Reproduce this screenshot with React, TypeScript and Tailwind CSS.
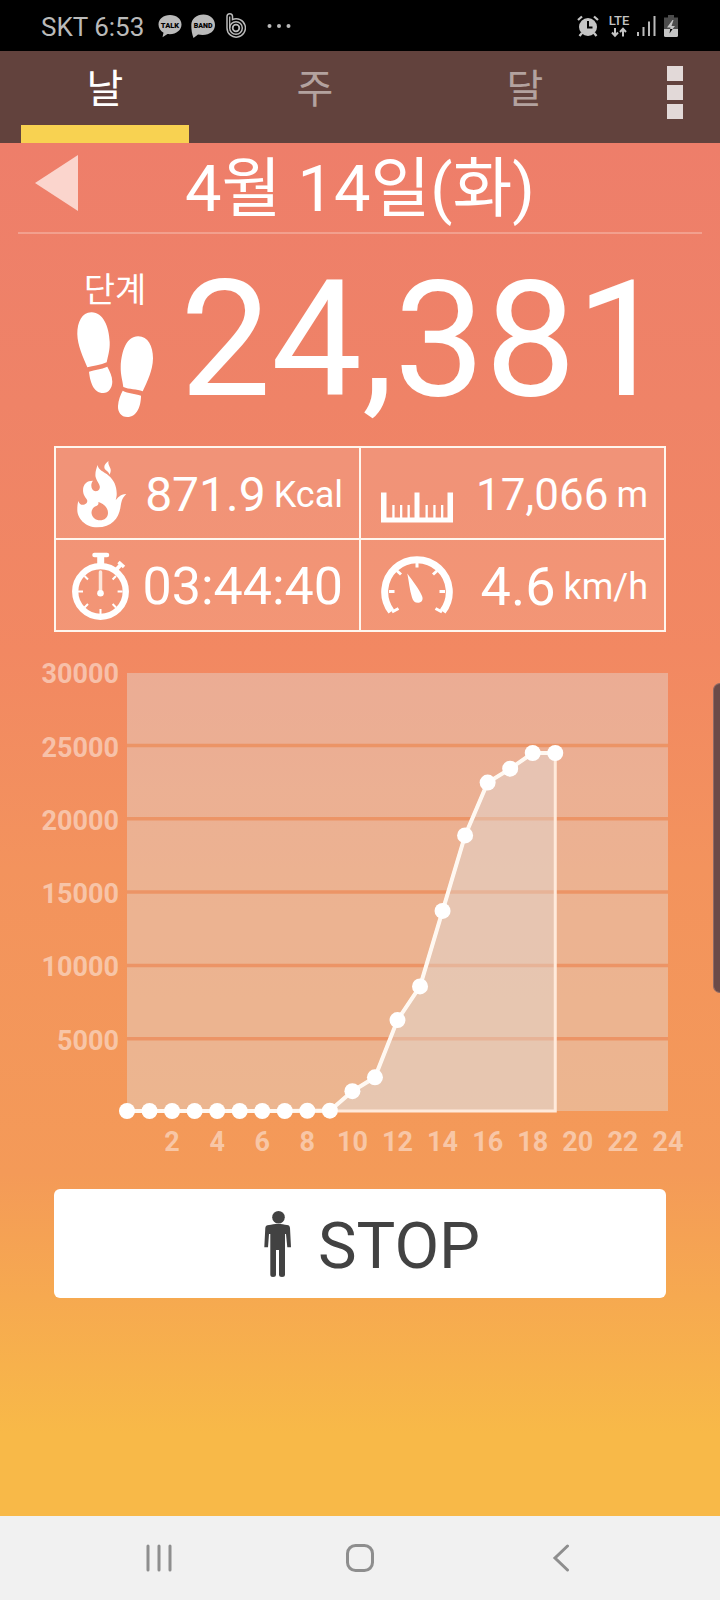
import type { ReactNode } from "react";

const tabs = [
  { label: "날", active: true },
  { label: "주", active: false },
  { label: "달", active: false },
];

// cumulative steps for every hour of the day
const hourlySteps = [
  0, 0, 0, 0, 0, 0, 0, 0, 15, 20, 1350, 2300, 6200, 8500, 13650, 18800, 22400, 23350, 24420, 24420,
];

const FireIcon = () => (
  <svg viewBox="0 0 72 72" className="h-18 w-18 shrink-0" fill="#fff" aria-hidden="true">
    <path
      fillRule="evenodd"
      d="M33.700 8C34 13 40 14.500 44.500 18.500C50 23 52.500 29 52.700 36.300C52.800 39 52.200 41 51.700 43C54 41 55.500 37.500 62.300 37C57.500 41.500 57.500 45 56.500 50C55 61 48 70.300 33.300 70.300C21 70.300 13.300 61 13.300 53C13.300 49.500 13.500 47 14.300 44C15.500 47.500 18 48.500 20.500 47.500C22.500 46.500 23.300 45.500 23.300 43.700C23 41.500 19.500 39.500 19.100 34.500C18.500 27.500 22.500 23.700 29 23.700C27 26 26.800 29.500 28.300 32.300C30 35 34 34.700 35.300 32.300C37.500 28 32.500 25 31.500 19.500C31 15 32.500 11 33.700 8ZM34.300 45C35 47.500 33.500 48.500 31 49.500C28.500 51 27.500 53.500 27.500 56C28 60.500 31.500 63.300 36 63.300C40.500 63.300 44 60.500 44 56C44 50.500 39.500 46.500 34.300 45Z"
    />
    <path d="M44.500 4C43.500 8.500 47.500 11 46.700 14C46.500 15.500 46.200 16.500 45.500 17.700C45 14 40.300 13.500 40.300 10C40.300 7.500 42.500 5.500 44.500 4Z" />
  </svg>
);

const StopwatchIcon = () => (
  <svg viewBox="0 0 72 72" className="h-18 w-18 shrink-0" fill="none" stroke="#fff" aria-hidden="true">
    <circle cx="36.500" cy="42.500" r="25.300" strokeWidth="6.300" />
    <path d="M30.500 6H43" strokeWidth="4.500" strokeLinecap="round" />
    <path d="M36.700 7V17" strokeWidth="7" />
    <path d="M52 21L57 15.500" strokeWidth="4" />
    <path d="M54.500 13L60 18" strokeWidth="3.500" />
    <path
      d="M14 42.500H19M53.600 42.500H58.600M36.500 60V65M20.500 27L24 30.500M52 27L48.600 30.500M20.500 58.500L24 55M52 58.500L48.600 55"
      strokeWidth="2"
    />
    <path d="M36.500 23V42" stroke="#fde6da" strokeWidth="3.500" strokeLinecap="round" />
    <circle cx="36.500" cy="44.300" r="3.300" fill="#fff" stroke="none" />
  </svg>
);

const RulerIcon = () => (
  <svg viewBox="0 0 72 72" className="h-18 w-18 shrink-0" fill="#fff" aria-hidden="true">
    <path d="M0 35.500H5.500V60.500H33.500V35.500H38.500V60.500H66.500V35.500H72V65.500H0Z" />
    <path d="M11.300 48h2.300v13h-2.300zM19 48h2.300v13H19zM26.500 48h2.300v13h-2.300zM44.500 48h2.300v13h-2.300zM52.300 48h2.300v13h-2.300zM60 48h2.300v13H60z" />
  </svg>
);

const GaugeIcon = () => (
  <svg viewBox="0 0 72 72" className="h-18 w-18 shrink-0" fill="none" stroke="#fff" aria-hidden="true">
    <path d="M10.300 62.500A32.300 32.300 0 1 1 61.700 62.500" strokeWidth="7" />
    <path
      d="M8 42.500H13.500M58.500 42.500H64M36 12V18.500M14 20L20 25.500M58 20L52 25.500M11 63L17.500 59.500M61 63L54.500 59.500"
      strokeWidth="3"
    />
    <path
      d="M26.300 24.500C32 32.500 38 39.500 41 47C42.500 50.500 41 53.500 37.500 53.800C34 54 32 52 31 48.500C28.500 40.500 28 32.500 26.300 24.500Z"
      fill="#fff"
      stroke="none"
    />
  </svg>
);

const StepsIcon = () => (
  <svg viewBox="0 0 76 105" className="h-[105px] w-[76px]" fill="#fff" aria-hidden="true">
    <path d="M14.700 0.300C5 0 0.300 10 0.300 22C0.500 33 6 45 10.300 55.300C16 54 24 53 29.700 50.300C31 44 33 38 32.700 30C32 14 26 0.500 14.700 0.300Z" />
    <path d="M12 59.700C18 57.500 24 57.500 30.300 54.700C32.500 59 35.300 64 35.300 69.700C35.300 76 31.500 81 26.300 81C16 81 13 69 12 59.700Z" />
    <path d="M61.300 24.300C71 24.500 76 34 76 46.300C75.800 59 70 70 65.700 79.300C60 77 52 77.500 46.300 75C45.500 68 43.500 63 43.700 54.700C44.500 38 50 24 61.300 24.300Z" />
    <path d="M45.700 78.700C51 81.500 58 81.500 64 83.700C64 94 60 105 50.300 105C44 105 40.700 100 41 94C41.300 88 43.500 83 45.700 78.700Z" />
  </svg>
);

const ManIcon = () => (
  <svg viewBox="0 0 27 66" className="h-[66px] w-[27px]" fill="#424242" aria-hidden="true">
    <circle cx="14.500" cy="6.300" r="6.300" />
    <path d="M5 14C10 12.500 18 12.500 23 14C25 14.300 25.700 15 26 17L27 36.300H23.300L22 23H21V63.500Q21 66 18 66Q15 66 15 63.500V39H12V63.500Q12 66 9 66Q6.300 66 6.300 63.500V23H5L4 36.300H0.300L1.300 17C1.500 15 2.500 14.300 5 14Z" />
  </svg>
);

const stats = [
  [
    { icon: <FireIcon />, value: "871.9", unit: "Kcal", size: "text-[48px]" },
    { icon: <RulerIcon />, value: "17,066", unit: "m", size: "text-[44px]" },
  ],
  [
    { icon: <StopwatchIcon />, value: "03:44:40", unit: "", size: "text-[52px]" },
    { icon: <GaugeIcon />, value: "4.6", unit: "km/h", size: "text-[54px]" },
  ],
];

const StatusBar = () => (
  <div className="flex h-[51px] items-center justify-between bg-black pr-[42px] pl-[41px] text-[#bababa]">
    <div className="flex items-center">
      <span className="pt-0.5 text-[26px] leading-none">SKT 6:53</span>
      <svg viewBox="0 0 24 24" className="ml-3.5 h-6 w-6" aria-hidden="true">
        <path
          d="M12 1C5.500 1 0.500 5 0.500 10.500C0.500 14 2.500 17 5.500 18.700L4.500 23.300L9.500 20C17.500 21 23.500 16.500 23.500 10.500C23.500 5 18.500 1 12 1Z"
          fill="#bababa"
        />
        <text x="12" y="13.500" textAnchor="middle" fontSize="7.500" fontWeight="900" fill="#000">TALK</text>
      </svg>
      <svg viewBox="0 0 24 24" className="ml-[9px] h-6 w-6" aria-hidden="true">
        <path
          d="M12.500 0.500C5.500 0.500 0.300 5 0.300 11C0.300 16 1 20 2.500 24L7 20.500C17 22.500 24 18 24 11C24 5 19 0.500 12.500 0.500Z"
          fill="#bababa"
        />
        <text x="12.200" y="14" textAnchor="middle" fontSize="7" fontWeight="900" fill="#000">BAND</text>
      </svg>
      <svg viewBox="0 0 20 25" className="ml-[11px] h-[25px] w-5" fill="none" stroke="#bababa" aria-hidden="true">
        <path d="M1 15V3.500A2.700 2.700 0 0 1 6.500 3.500V6.500A9.200 9.200 0 1 1 1 15Z" strokeWidth="1.500" />
        <path d="M3.700 15V3.500" strokeWidth="1.300" />
        <circle cx="10" cy="15" r="6.300" strokeWidth="1.500" />
        <circle cx="10" cy="15" r="3.300" strokeWidth="1.800" />
      </svg>
      <svg viewBox="0 0 24 24" className="ml-[21px] h-6 w-6" fill="#bababa" aria-hidden="true">
        <circle cx="2.500" cy="12" r="2" />
        <circle cx="12" cy="12" r="2" />
        <circle cx="21.500" cy="12" r="2" />
      </svg>
    </div>
    <div className="flex items-center">
      <svg viewBox="0 0 22 22" className="h-[22px] w-[22px]" fill="none" stroke="#c4c4c4" aria-hidden="true">
        <circle cx="11" cy="12" r="9" fill="#c4c4c4" stroke="none" />
        <path d="M1 5L5 1.500M21 5L17 1.500M5 18L2.500 21M17 18L19.500 21" strokeWidth="2.300" />
        <path d="M11 6V12.500H15.500" stroke="#000" strokeWidth="2" />
      </svg>
      <svg viewBox="0 0 22 24" className="ml-[9px] h-6 w-[22px]" fill="none" stroke="#c4c4c4" aria-hidden="true">
        <text x="11" y="10.500" textAnchor="middle" fontSize="13" fontWeight="500" fill="#c4c4c4" stroke="none">LTE</text>
        <path d="M7 14V21.500M4 18.500L7 21.800L10 18.500M15 22.500V15M12 18L15 14.700L18 18" strokeWidth="2" />
      </svg>
      <svg viewBox="0 0 20 20" className="ml-1.5 h-5 w-5" stroke="#bababa" strokeWidth="2" aria-hidden="true">
        <path d="M2 20V16M7.500 20V11M13 20V5.500M18.500 20V0" />
      </svg>
      <svg viewBox="0 0 14 22" className="ml-2 h-[22px] w-3.5" aria-hidden="true">
        <path d="M4 0H10V2.500H14V14H0V2.500H4Z" fill="#4b4b4b" />
        <path d="M0 14H14V20.500Q14 22 12.500 22H1.500Q0 22 0 20.500Z" fill="#c4c4c4" />
        <path d="M8.500 5L3 12.500H6.500L5.500 18L11 11H7.500L9.500 5Z" fill="#c4c4c4" />
        <path d="M6.200 14H8.600L5.500 18.500Z" fill="#000" />
      </svg>
    </div>
  </div>
);

const TabBar = () => (
  <nav className="flex h-[92px] bg-[#62423d]">
    {tabs.map((tab) => (
      <button
        key={tab.label}
        type="button"
        className={`relative flex flex-[7] justify-center pt-4 text-[40px] leading-[46px] ${
          tab.active ? "text-white" : "text-[#b3a29f]"
        }`}
      >
        {tab.label}
        {tab.active && <span className="absolute inset-x-[21px] bottom-0 h-[18px] bg-[#f8d251]" />}
      </button>
    ))}
    <button type="button" aria-label="메뉴" className="flex flex-[3] flex-col items-center gap-1 pt-[15px]">
      <span className="h-[15px] w-4 bg-[#e2d9d8]" />
      <span className="h-[15px] w-4 bg-[#e2d9d8]" />
      <span className="h-[15px] w-4 bg-[#e2d9d8]" />
    </button>
  </nav>
);

const StatCell = ({ icon, value, unit, size }: { icon: ReactNode; value: string; unit: string; size: string }) => (
  <td className="h-[92px] border-2 border-[#fff6ee] bg-white/12 p-0 first:pl-2 last:pl-5">
    <div className="flex items-center justify-between pr-4">
      {icon}
      <div className="flex items-center gap-2 pt-1 leading-none whitespace-nowrap">
        <span className={size}>{value}</span>
        {unit && <span className="text-[36px]">{unit}</span>}
      </div>
    </div>
  </td>
);

const LEFT = 127;
const BASE = 459;
const xOf = (hour: number) => LEFT + hour * 22.54;
const yOf = (steps: number) => BASE - (steps / 5000) * 73.3;

const StepsChart = () => {
  const points = hourlySteps.map((steps, hour) => `${xOf(hour)},${yOf(steps)}`).join(" ");
  const last = xOf(hourlySteps.length - 1);

  return (
    <svg viewBox="0 0 720 512" className="mt-5 block w-full" role="img" aria-label="단계">
      <rect x={LEFT} y="21" width="541" height="438" fill="#e0e0e0" fillOpacity="0.4" />
      {[5000, 10000, 15000, 20000, 25000].map((value) => (
        <line
          key={value}
          x1={LEFT}
          x2="668"
          y1={yOf(value) + 1}
          y2={yOf(value) + 1}
          stroke="#ec9466"
          strokeWidth="3.500"
        />
      ))}
      <g fill="#fbe6dc" fillOpacity="0.6" fontSize="27" fontWeight="700">
        {[5000, 10000, 15000, 20000, 25000, 30000].map((value) => (
          <text key={value} x="119" y={yOf(value) + 12} textAnchor="end">
            {value}
          </text>
        ))}
        {[2, 4, 6, 8, 10, 12, 14, 16, 18, 20, 22, 24].map((hour) => (
          <text key={hour} x={xOf(hour)} y="499" textAnchor="middle">
            {hour}
          </text>
        ))}
      </g>
      <polygon
        points={`${LEFT},${BASE} ${points} ${last},${BASE}`}
        fill="#e0e0e0"
        fillOpacity="0.4"
        stroke="#ffeadb"
        strokeWidth="3"
      />
      <polyline points={points} fill="none" stroke="#fff8f1" strokeWidth="4" />
      {hourlySteps.map((steps, hour) => (
        <circle key={hour} cx={xOf(hour)} cy={yOf(steps)} r="8" fill="#fff" />
      ))}
    </svg>
  );
};

const NavBar = () => (
  <div className="grid h-[84px] grid-cols-[1fr_84px_1fr] items-center bg-[#f1f1f1] px-[116px]">
    <button type="button" aria-label="최근 앱" className="flex h-full w-[86px] items-center justify-center">
      <svg viewBox="0 0 26 28" className="h-7 w-[26px]" stroke="#8e8e8e" strokeWidth="3" strokeLinecap="round">
        <path d="M2 2V26M13 2V26M24 2V26" />
      </svg>
    </button>
    <button type="button" aria-label="홈" className="flex h-full items-center justify-center">
      <svg viewBox="0 0 30 30" className="h-[30px] w-[30px]" fill="none" stroke="#8e8e8e" strokeWidth="3">
        <rect x="2.500" y="2.500" width="25" height="25" rx="8" />
      </svg>
    </button>
    <button type="button" aria-label="뒤로" className="flex h-full w-[86px] items-center justify-center justify-self-end">
      <svg viewBox="0 0 18 28" className="h-7 w-[18px]" fill="none" stroke="#8e8e8e" strokeWidth="3" strokeLinecap="round">
        <path d="M15.500 2L3 14L15.500 26" />
      </svg>
    </button>
  </div>
);

const App = () => {
  return (
    <div className="relative flex min-h-screen flex-col font-[Roboto,'Noto_Sans_CJK_KR',sans-serif] text-white">
      <StatusBar />
      <TabBar />
      <main className="flex-1 bg-[linear-gradient(180deg,#ee7e6a_0%,#ef8367_19%,#f28862_37%,#f3935d_53%,#f49a58_75%,#f6a950_84%,#f8b948_94%,#f8b948_100%)]">
        <div className="mx-[18px] grid grid-cols-[80px_1fr_80px] items-center border-b-2 border-white/25">
          <button type="button" aria-label="이전 날" className="flex h-full items-start pt-3 pl-[17px]">
            <svg viewBox="0 0 43 56" className="h-14 w-[43px]" fill="#fbd5cd">
              <path d="M43 0V56L0 28Z" />
            </svg>
          </button>
          <h1 className="pt-1 text-center text-[65px] leading-[85px] whitespace-nowrap">4월 14일(화)</h1>
        </div>

        <section className="flex items-center justify-center gap-[27px] py-[25px] pl-6">
          <div className="flex flex-col items-center gap-0.5 pt-1.5">
            <h2 className="text-[34px] leading-[40px]">단계</h2>
            <StepsIcon />
          </div>
          <p className="text-[162px] leading-none">24,381</p>
        </section>

        <div className="px-[54px]">
          <table className="w-full table-fixed border-collapse">
            <tbody>
              {stats.map((row, index) => (
                <tr key={index}>
                  {row.map((stat) => (
                    <StatCell key={stat.value} {...stat} />
                  ))}
                </tr>
              ))}
            </tbody>
          </table>
        </div>

        <StepsChart />

        <div className="px-[54px] pt-[25px]">
          <button
            type="button"
            className="flex h-[109px] w-full items-center justify-center gap-[27px] rounded-md bg-white pl-6 text-[65px] leading-none text-[#424242]"
          >
            <ManIcon />
            <span className="pt-1.5">STOP</span>
          </button>
        </div>
      </main>
      <NavBar />
      {/* edge panel handle */}
      <div className="absolute top-[683px] right-0 h-[310px] w-[7px] rounded-l-lg border border-r-0 border-[#8f6a66] bg-[#6b4a48]" />
    </div>
  );
};

export default App;
